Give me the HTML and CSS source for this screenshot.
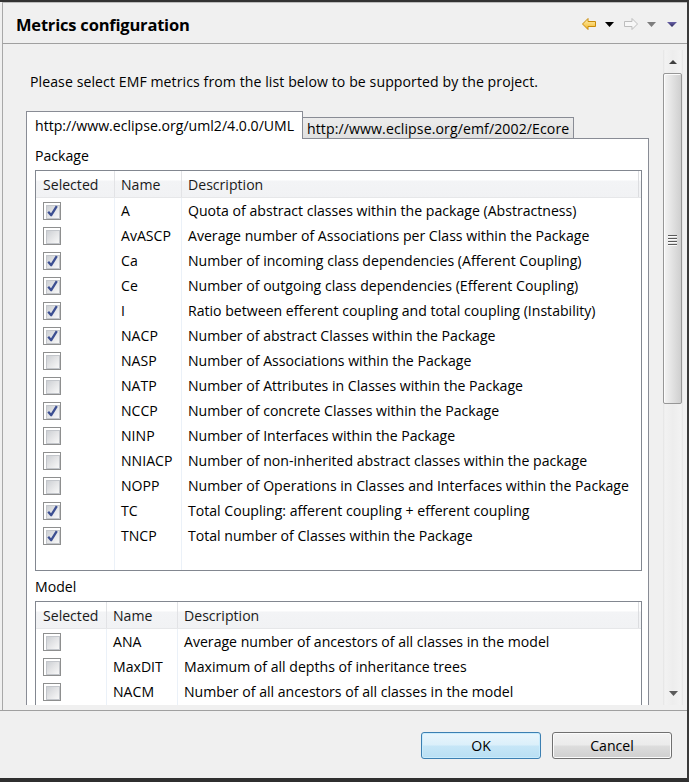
FILE: index.html
```html
<!DOCTYPE html>
<html>
<head>
<meta charset="utf-8">
<title>Metrics configuration</title>
<link rel="stylesheet" href="styles.css">
</head>
<body>
<div class="dialog">
  <div class="header">
    <div class="title">Metrics configuration</div>
    <div class="nav">
      <svg class="ico-arrow" width="14" height="12" viewBox="0 0 14 12">
        <defs><linearGradient id="gy" x1="0" y1="0" x2="0" y2="1"><stop offset="0" stop-color="#fff3b8"/><stop offset="1" stop-color="#f4b622"/></linearGradient></defs>
        <path d="M0.5 6 L6 0.5 L6 3.5 L13.5 3.5 L13.5 8.5 L6 8.5 L6 11.5 Z" fill="url(#gy)" stroke="#c88a0a" stroke-width="1" stroke-linejoin="round"/>
      </svg>
      <svg class="ico-tri" width="9" height="5" viewBox="0 0 9 5"><path d="M0 0 H9 L4.5 5 Z" fill="#000"/></svg>
      <svg class="ico-arrow fwd" width="14" height="12" viewBox="0 0 14 12">
        <path d="M13.5 6 L8 0.5 L8 3.5 L0.5 3.5 L0.5 8.5 L8 8.5 L8 11.5 Z" fill="#f7f7f7" stroke="#bdbdbd" stroke-width="1" stroke-linejoin="round"/>
      </svg>
      <svg class="ico-tri" width="9" height="5" viewBox="0 0 9 5"><path d="M0 0 H9 L4.5 5 Z" fill="#7d7d7d"/></svg>
      <svg class="ico-tri last" width="10" height="5" viewBox="0 0 10 5">
        <defs><linearGradient id="gb" x1="0" y1="0" x2="0" y2="1"><stop offset="0" stop-color="#6a62a8"/><stop offset="1" stop-color="#2c2a5c"/></linearGradient></defs>
        <path d="M0 0 H10 L5 5 Z" fill="url(#gb)"/>
      </svg>
    </div>
  </div>

  <div class="content">
    <div class="scroll">
      <p class="intro">Please select EMF metrics from the list below to be supported by the project.</p>
      <div class="tabs">
        <div class="tab active">http://www.eclipse.org/uml2/4.0.0/UML</div>
        <div class="tab">http://www.eclipse.org/emf/2002/Ecore</div>
      </div>
      <div class="panel">
        <div class="group-label">Package</div>
        <div class="table pkg">
          <div class="thead">
            <div class="th">Selected</div><div class="th">Name</div><div class="th">Description</div>
          </div>
          <div class="row"><div class="cell"><span class="cb on"></span></div><div class="cell">A</div><div class="cell">Quota of abstract classes within the package (Abstractness)</div></div>
          <div class="row"><div class="cell"><span class="cb"></span></div><div class="cell">AvASCP</div><div class="cell">Average number of Associations per Class within the Package</div></div>
          <div class="row"><div class="cell"><span class="cb on"></span></div><div class="cell">Ca</div><div class="cell">Number of incoming class dependencies (Afferent Coupling)</div></div>
          <div class="row"><div class="cell"><span class="cb on"></span></div><div class="cell">Ce</div><div class="cell">Number of outgoing class dependencies (Efferent Coupling)</div></div>
          <div class="row"><div class="cell"><span class="cb on"></span></div><div class="cell">I</div><div class="cell">Ratio between efferent coupling and total coupling (Instability)</div></div>
          <div class="row"><div class="cell"><span class="cb on"></span></div><div class="cell">NACP</div><div class="cell">Number of abstract Classes within the Package</div></div>
          <div class="row"><div class="cell"><span class="cb"></span></div><div class="cell">NASP</div><div class="cell">Number of Associations within the Package</div></div>
          <div class="row"><div class="cell"><span class="cb"></span></div><div class="cell">NATP</div><div class="cell">Number of Attributes in Classes within the Package</div></div>
          <div class="row"><div class="cell"><span class="cb on"></span></div><div class="cell">NCCP</div><div class="cell">Number of concrete Classes within the Package</div></div>
          <div class="row"><div class="cell"><span class="cb"></span></div><div class="cell">NINP</div><div class="cell">Number of Interfaces within the Package</div></div>
          <div class="row"><div class="cell"><span class="cb"></span></div><div class="cell">NNIACP</div><div class="cell">Number of non-inherited abstract classes within the package</div></div>
          <div class="row"><div class="cell"><span class="cb"></span></div><div class="cell">NOPP</div><div class="cell">Number of Operations in Classes and Interfaces within the Package</div></div>
          <div class="row"><div class="cell"><span class="cb on"></span></div><div class="cell">TC</div><div class="cell">Total Coupling: afferent coupling + efferent coupling</div></div>
          <div class="row"><div class="cell"><span class="cb on"></span></div><div class="cell">TNCP</div><div class="cell">Total number of Classes within the Package</div></div>
          <div class="row filler f22"><div class="cell"></div><div class="cell"></div><div class="cell"></div></div>
        </div>

        <div class="group-label second">Model</div>
        <div class="table model">
          <div class="thead">
            <div class="th">Selected</div><div class="th">Name</div><div class="th">Description</div>
          </div>
          <div class="row"><div class="cell"><span class="cb"></span></div><div class="cell">ANA</div><div class="cell">Average number of ancestors of all classes in the model</div></div>
          <div class="row"><div class="cell"><span class="cb"></span></div><div class="cell">MaxDIT</div><div class="cell">Maximum of all depths of inheritance trees</div></div>
          <div class="row"><div class="cell"><span class="cb"></span></div><div class="cell">NACM</div><div class="cell">Number of all ancestors of all classes in the model</div></div>
          <div class="row filler f40"><div class="cell"></div><div class="cell"></div><div class="cell"></div></div>
        </div>
      </div>
    </div>

    <div class="vscroll">
      <div class="sb-btn"><svg width="8" height="4" viewBox="0 0 8 4"><path d="M0 4 L4 0 L8 4 Z" fill="#3f3f3f"/></svg></div>
      <div class="thumb">
        <svg class="grip" width="9" height="11" viewBox="0 0 9 11">
          <path d="M0 0.5 H9 M0 3.5 H9 M0 6.5 H9 M0 9.5 H9" stroke="#5a5a5a" stroke-width="1"/>
          <path d="M0 1.5 H9 M0 4.5 H9 M0 7.5 H9 M0 10.5 H9" stroke="#fafafa" stroke-width="1"/>
        </svg>
      </div>
      <div class="track"></div>
      <div class="sb-btn"><svg width="9" height="5" viewBox="0 0 9 5"><path d="M0 0 L9 0 L4.5 5 Z" fill="#5a5a5a"/></svg></div>
    </div>
  </div>

  <div class="sep"></div>

  <div class="footer">
    <button class="btn ok">OK</button>
    <button class="btn">Cancel</button>
  </div>
</div>
</body>
</html>
```

FILE: styles.css
```css
* { box-sizing: border-box; }
html, body { margin: 0; padding: 0; }
body {
  width: 689px;
  height: 782px;
  overflow: hidden;
  background: #f0f0f0;
  font-family: "Open Sans", "Noto Sans", sans-serif;
  font-size: 14.1px;
  color: #000;
}
.dialog {
  width: 689px;
  height: 782px;
  display: flex;
  flex-direction: column;
  border-top: 2px solid #333333;
  border-right: 2px solid #3a3a3a;
  border-bottom: 4px solid #2f2f2f;
}

/* header */
.header {
  height: 42px;
  flex: none;
  margin-left: 2px;
  border-left: 1px solid #a8a8a8;
  border-top: 1px solid #bcbcbc;
  border-bottom: 1px solid #a0a0a0;
  display: flex;
  align-items: center;
  justify-content: space-between;
  padding-left: 13px;
}
.title {
  font-weight: 700;
  font-size: 16.5px;
  letter-spacing: -0.2px;
  margin-top: 3px;
}
.nav {
  display: flex;
  align-items: center;
  margin-right: 10px;
  margin-top: 2px;
}
.nav svg { display: block; }
.ico-tri { margin-left: 9px; }
.ico-arrow.fwd { margin-left: 10px; }
.ico-tri.last { margin-left: 11px; }

/* scrolled content */
.content {
  height: 666px;
  flex: none;
  margin-left: 2px;
  border-left: 1px solid #a8a8a8;
  padding: 6px 4px 5px 0;
  display: flex;
}
.scroll {
  flex: 1;
  height: 655px;
  overflow: hidden;
  padding-left: 23px;
}
.intro {
  margin: 22px 0 19px 4px;
  line-height: 20px;
  height: 20px;
  white-space: nowrap;
  letter-spacing: 0.08px;
}
.tabs {
  display: flex;
  align-items: flex-end;
  height: 27px;
}
.tab {
  display: flex;
  align-items: center;
  white-space: nowrap;
  border: 1px solid #898c95;
  border-bottom: none;
}
.tab.active {
  width: 277px;
  height: 28px;
  margin-bottom: -1px;
  padding-left: 8px;
  background: #fff;
  position: relative;
  z-index: 1;
}
.tab:not(.active) {
  width: 271px;
  height: 21px;
  border-left: none;
  padding-left: 4px;
  background: linear-gradient(#ececec, #e0e0e0);
  letter-spacing: 0.1px;
}
.panel {
  width: 623px;
  height: 700px;
  background: #fff;
  border: 1px solid #898c95;
  padding: 0 6px 0 8px;
}
.group-label {
  height: 20px;
  line-height: 20px;
  margin: 7px 0 4px;
}
.group-label.second { margin-top: 6px; }

/* tables */
.table {
  border: 1px solid #828790;
  background: #fff;
}
.thead, .row { display: grid; }
.pkg .thead, .pkg .row { grid-template-columns: 79px 67px 1fr; }
.model .thead, .model .row { grid-template-columns: 71px 71px 1fr; }
.thead {
  height: 27px;
  background: linear-gradient(#ffffff 0, #ffffff 36%, #f3f4f6 37%, #f1f2f4 100%);
  border-bottom: 1px solid #e6e7e9;
}
.th {
  display: flex;
  align-items: center;
  padding-left: 6px;
  padding-top: 1px;
  border-right: 1px solid #e2e3e6;
  color: #1a1a1a;
  white-space: nowrap;
}
.th:first-child { padding-left: 7px; }
.th:last-child { border-right: 1px solid #dcdde0; margin-right: 2px; }
.row { height: 25px; }
.row.f22 { height: 22px; }
.row.f40 { height: 40px; }
.cell {
  display: flex;
  align-items: center;
  padding-left: 6px;
  border-right: 1px solid #ebf1f8;
  white-space: nowrap;
}
.cell:first-child { padding-left: 7px; }
.cell:last-child { border-right: none; }

/* checkboxes */
.cb {
  display: block;
  width: 18px;
  height: 18px;
  border: 1px solid #8e8f8f;
  background: #fff;
  padding: 2px;
  position: relative;
}
.cb::before {
  content: "";
  display: block;
  width: 100%;
  height: 100%;
  border: 1px solid #c3c6cb;
  background: linear-gradient(135deg, #cdd0d4 0%, #e2e3e5 45%, #f8f8f8 100%);
}
.cb.on::after {
  content: "";
  position: absolute;
  left: 3px;
  top: 2px;
  width: 11px;
  height: 12px;
  background: no-repeat center / 11px 12px url("data:image/svg+xml;utf8,<svg xmlns='http://www.w3.org/2000/svg' width='11' height='12' viewBox='0 0 11 12'><path d='M1.2 6.8 L4.2 10.2 L9.8 1.2' fill='none' stroke='%233c4f92' stroke-width='2.3' stroke-linejoin='round'/></svg>");
}

/* scrollbar */
.vscroll {
  width: 20px;
  height: 655px;
  display: flex;
  flex-direction: column;
  background: linear-gradient(to right, #e4e4e4 0, #f2f2f2 2px, #ededed 50%, #f2f2f2 calc(100% - 2px), #e4e4e4 100%);
}
.sb-btn {
  height: 23px;
  flex: none;
  display: flex;
  align-items: center;
  justify-content: center;
}
.thumb {
  height: 331px;
  flex: none;
  margin: 0 1px 0 0;
  border: 1px solid #979797;
  border-radius: 2px;
  background: linear-gradient(to right, #f4f4f4 0, #e9e9e9 30%, #dedede 60%, #cfcfcf 100%);
  box-shadow: inset 1px 1px 0 #fcfcfc;
  display: flex;
  align-items: center;
  justify-content: center;
}
.grip { display: block; margin-top: 4px; }
.track { flex: 1; }

/* footer */
.sep {
  height: 1px;
  flex: none;
  background: #a0a0a0;
}
.footer {
  flex: 1;
  display: flex;
  justify-content: flex-end;
  align-items: flex-start;
  gap: 11px;
  padding: 21px 15px 0 0;
}
.btn {
  width: 120px;
  height: 27px;
  font-family: inherit;
  font-size: 14.1px;
  color: #000;
  border: 1px solid #707070;
  border-radius: 3px;
  background: linear-gradient(#f2f2f2 0%, #ebebeb 48%, #dddddd 52%, #cfcfcf 100%);
  box-shadow: inset 0 0 0 1px #fbfbfb;
  padding: 0;
}
.btn.ok {
  border-color: #3c7fb1;
  background: linear-gradient(#e9f5fc 0%, #dbeffa 48%, #c6e6f7 52%, #b9dff3 100%);
  box-shadow: inset 0 0 0 1px #c9ecfd;
}
```
